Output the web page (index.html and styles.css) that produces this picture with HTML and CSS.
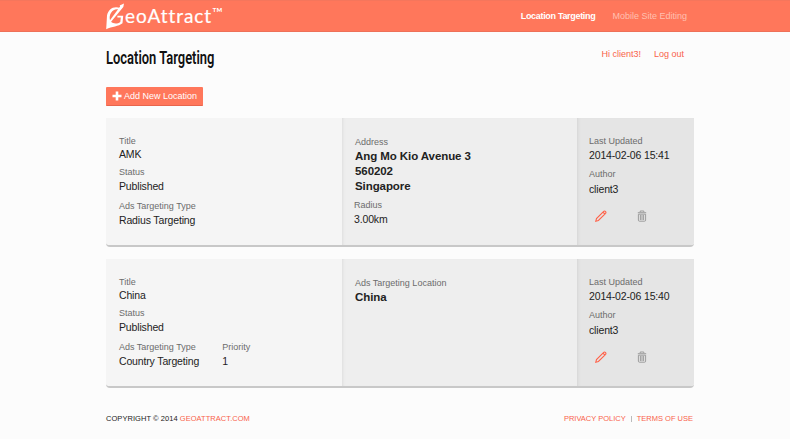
FILE: index.html
```html
<!DOCTYPE html>
<html lang="en">
<head>
<meta charset="utf-8">
<title>GeoAttract - Location Targeting</title>
<link rel="stylesheet" href="styles.css">
</head>
<body>
<svg class="defs" width="0" height="0">
  <symbol id="pencil" viewBox="0 0 12 12"><path d="M.8 11.2 1.5 8.6 8.7 1.4Q9.5.6 10.4 1.5 11.4 2.4 10.6 3.3L3.4 10.5ZM8 2.2 9.8 4" fill="none" stroke="currentColor" stroke-width="1.1"/></symbol>
  <symbol id="trash" viewBox="0 0 10 12"><path d="M3.2 2V1h3.6V2M.8 2.7h8.4M1.4 4.2v6q0 1 1 1h5.2q1 0 1-1v-6zM3.4 5v5M5 5v5M6.6 5v5" fill="none" stroke="currentColor" stroke-width=".95"/></symbol>
</svg>
<header class="topbar">
  <div class="wrap topbar-inner">
    <a class="logo">
      <svg class="logo-mark" width="21" height="28" viewBox="0 0 21 28"><path d="M14.5 6.2C8 3.2 2.3 7 1 13.5L.2 27.2C6 24.2 12.5 24.6 16.5 21.2L17.2 13.8H11.4V15.5H14.8L14.3 19.9C11 22.4 6.9 21.5 5.1 19.7L17.3 4.9 18 1.6 13.7 3.4 14.1 4.6 4 18.2C2.4 12 7.3 5.6 13.4 7.8Z" fill="#fff"/></svg>
      <span class="logo-name">eoAttract</span><span class="tm">™</span>
    </a>
    <nav class="nav"><a class="active">Location Targeting</a><a>Mobile Site Editing</a></nav>
  </div>
</header>
<main class="wrap">
  <div class="page-head">
    <h1>Location Targeting</h1>
    <div class="user"><a>Hi client3!</a><a>Log out</a></div>
  </div>
  <a class="add"><svg width="10" height="10" viewBox="0 0 10 10"><path d="M5 .5v9M.5 5h9" stroke="#fff" stroke-width="2.6"/></svg><span>Add New Location</span></a>

  <section class="card">
    <dl class="info">
      <dt>Title</dt><dd class="first">AMK</dd>
      <dt class="status">Status</dt><dd>Published</dd>
      <div class="types"><div><dt>Ads Targeting Type</dt><dd>Radius Targeting</dd></div></div>
    </dl>
    <dl class="place">
      <dt>Address</dt><dd class="address">Ang Mo Kio Avenue 3<br>560202<br>Singapore</dd>
      <div class="radius"><dt>Radius</dt><dd>3.00km</dd></div>
    </dl>
    <dl class="meta">
      <dt>Last Updated</dt><dd>2014-02-06 15:41</dd>
      <dt class="author">Author</dt><dd>client3</dd>
      <div class="actions"><svg class="edit"><use href="#pencil"/></svg><svg class="delete"><use href="#trash"/></svg></div>
    </dl>
  </section>

  <section class="card">
    <dl class="info">
      <dt>Title</dt><dd class="first">China</dd>
      <dt class="status">Status</dt><dd>Published</dd>
      <div class="types"><div><dt>Ads Targeting Type</dt><dd>Country Targeting</dd></div><div><dt>Priority</dt><dd>1</dd></div></div>
    </dl>
    <dl class="place">
      <dt>Ads Targeting Location</dt><dd class="address">China</dd>
    </dl>
    <dl class="meta">
      <dt>Last Updated</dt><dd>2014-02-06 15:40</dd>
      <dt class="author">Author</dt><dd>client3</dd>
      <div class="actions"><svg class="edit"><use href="#pencil"/></svg><svg class="delete"><use href="#trash"/></svg></div>
    </dl>
  </section>
</main>
<footer class="wrap footer">
  <span>COPYRIGHT © 2014 <a>GEOATTRACT.COM</a></span>
  <span class="legal"><a>PRIVACY POLICY</a><i></i><a>TERMS OF USE</a></span>
</footer>
</body>
</html>
```
FILE: styles.css
```css
* { box-sizing: border-box; }
body { margin: 0; height: 439px; overflow: hidden; background: #fcfcfc; color: #222; font: 10.5px/12px "Liberation Sans", Arial, sans-serif; white-space: nowrap; }
.defs { position: absolute; }
.wrap { width: 587px; margin-left: 106px; }
a { color: #f9634b; text-decoration: none; }

.topbar { height: 32px; background: #ff775b; border-top: 1px solid #f5765c; border-bottom: 1px solid #ee7159; }
.topbar-inner { display: flex; justify-content: space-between; }
.logo { display: flex; height: 30px; color: #fff; }
.logo-mark { margin-top: 1px; }
.logo-name { margin: 4px 0 0 -2px; font: 19px/22px Lato, sans-serif; letter-spacing: 0.95px; -webkit-text-stroke: .2px #fff; }
.tm { margin: 4px 0 0 0; font: 14px/15px Lato, sans-serif; }
.nav { display: flex; gap: 17px; padding: 9px 6px 0 0; font-size: 9px; }
.nav a { color: #ffc0b0; }
.nav .active { color: #fff; font-weight: bold; letter-spacing: -.31px; }

.page-head { display: flex; justify-content: space-between; height: 55px; }
h1 { margin: 15px 0 0; height: 22px; color: #111; font: 600 18.5px/22px Roboto, sans-serif; transform: scaleX(.7); transform-origin: left; }
.user { display: flex; gap: 13px; padding: 16px 9px 0 0; font-size: 9px; }
.add { display: flex; align-items: center; gap: 2px; width: 97px; height: 19px; padding-left: 6px; background: #ff775b; border-bottom: 1px solid #e8654d; border-radius: 1px; color: #fff; font-size: 9px; }

.card { display: flex; width: 588px; height: 129px; margin: 12px 0 0; border-bottom: 2px solid #c8c8c8; border-radius: 0 0 4px 4px; padding-left: 1px; background: #f5f5f5; }
dl, dd { margin: 0; }
dt { color: #6c6c6c; font-size: 9px; }
dd { margin-top: 2px; letter-spacing: -.15px; }
.info { width: 235px; padding: 17px 0 0 12px; }
.info .first { margin-top: 1px; }
.status { margin-top: 6px; }
.types { display: flex; gap: 23px; margin-top: 8px; }
.place { width: 235px; padding: 18px 0 0 13px; background: #eee; box-shadow: inset 3px 0 3px -2px #ddd; }
.address { font-weight: bold; font-size: 11.5px; line-height: 15px; margin-top: 1px; letter-spacing: -.08px; }
.radius { margin: 5px 0 0 -1px; }
.meta { flex: 1; padding: 17px 0 0 12px; background: #e5e5e5; box-shadow: inset 3px 0 3px -2px #d4d4d4; border-radius: 0 0 3px 0; }
.author { margin-top: 7px; }
.meta .author + dd { margin-top: 3px; }
.actions { display: flex; gap: 30px; padding: 15px 0 0 6px; }
.edit { width: 12px; height: 12px; color: #ff6249; }
.delete { width: 10px; height: 12px; color: #999; }

.footer { display: flex; justify-content: space-between; margin-top: 25px; font-size: 7.5px; }
.footer > span:first-child { letter-spacing: .05px; }
.legal { display: flex; align-items: center; }
.legal i { width: 1px; height: 6px; margin: 0 5px; background: #bbb; }
```
